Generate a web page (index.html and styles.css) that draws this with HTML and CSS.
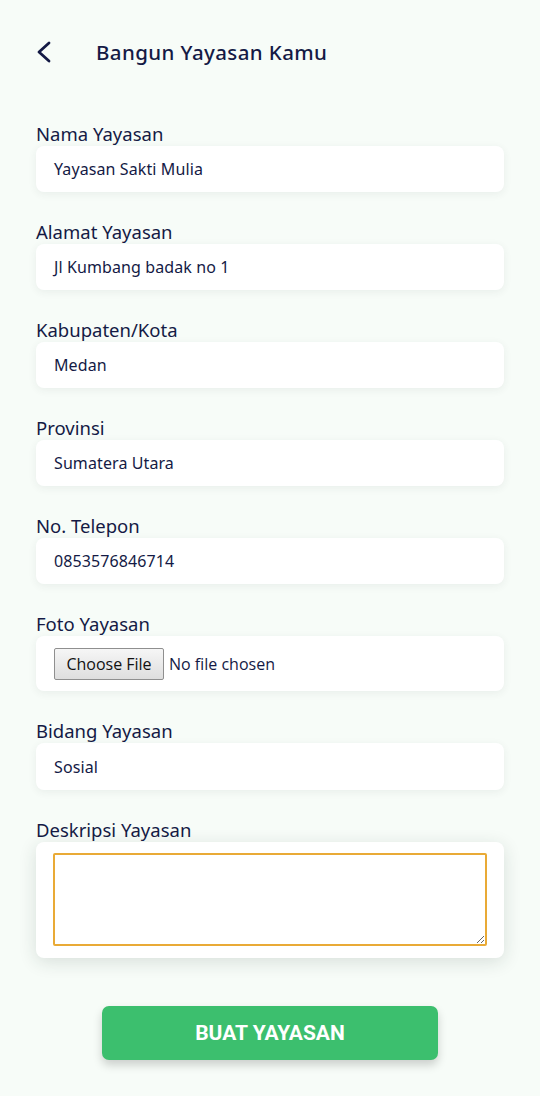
FILE: index.html
```html
<!DOCTYPE html>
<html lang="id">
<head>
<meta charset="utf-8">
<title>Bangun Yayasan Kamu</title>
<link rel="stylesheet" href="styles.css">
</head>
<body>
<div class="page">
  <header class="topbar">
    <button class="back" aria-label="Kembali">
      <svg width="16" height="22" viewBox="0 0 16 22"><path d="M13 2 L3 11 L13 20" fill="none" stroke="#141a45" stroke-width="2.8" stroke-linecap="round" stroke-linejoin="round"/></svg>
    </button>
    <h1 class="title">Bangun Yayasan Kamu</h1>
  </header>

  <form class="form">
    <div class="field">
      <label class="label">Nama Yayasan</label>
      <div class="box">Yayasan Sakti Mulia</div>
    </div>
    <div class="field">
      <label class="label">Alamat Yayasan</label>
      <div class="box">Jl Kumbang badak no 1</div>
    </div>
    <div class="field">
      <label class="label">Kabupaten/Kota</label>
      <div class="box">Medan</div>
    </div>
    <div class="field">
      <label class="label">Provinsi</label>
      <div class="box">Sumatera Utara</div>
    </div>
    <div class="field">
      <label class="label">No. Telepon</label>
      <div class="box">0853576846714</div>
    </div>
    <div class="field">
      <label class="label">Foto Yayasan</label>
      <div class="box box-file">
        <span class="file-btn">Choose File</span>
        <span class="file-name">No file chosen</span>
      </div>
    </div>
    <div class="field">
      <label class="label">Bidang Yayasan</label>
      <div class="box box-select">Sosial</div>
    </div>
    <div class="field">
      <label class="label">Deskripsi Yayasan</label>
      <div class="box box-area">
        <textarea class="area"></textarea>
      </div>
    </div>
    <div class="actions">
      <button type="button" class="submit">BUAT YAYASAN</button>
    </div>
  </form>
</div>
</body>
</html>
```
FILE: styles.css
```css
* { box-sizing: border-box; }
html, body { margin: 0; padding: 0; }
body {
  background: #f7fcf8;
  font-family: "Noto Sans", "Open Sans", sans-serif;
  color: #141a45;
  width: 540px;
  min-height: 1096px;
}
.page { padding: 0 36px; }
.topbar {
  display: flex;
  align-items: center;
  height: 28px;
  margin-top: 38px;
}
.back {
  background: none;
  border: 0;
  padding: 0;
  width: 16px;
  height: 22px;
  display: flex;
}
.title {
  margin: 0 0 0 44px;
  font-family: "Noto Sans", "Open Sans", sans-serif;
  font-weight: 500;
  font-size: 20.5px;
  letter-spacing: 0.4px;
  color: #141a45;
}
.form { display: flex; flex-direction: column; padding-top: 28px; }
.field { display: flex; flex-direction: column; margin-top: 28px; }
.label {
  font-size: 18.5px;
  line-height: 24px;
  font-weight: 450;
  color: #141a45;
}
.box {
  background: #fff;
  border-radius: 8px;
  height: 46px;
  padding: 0 18px;
  display: flex;
  align-items: center;
  font-size: 16px;
  font-weight: 430;
  letter-spacing: 0.1px;
  color: #141a45;
  box-shadow: 0 2px 8px rgba(40, 60, 50, 0.07);
}
.box-file { height: 55px; }
.box-select { height: 47px; }
.file-btn {
  display: inline-flex;
  align-items: center;
  justify-content: center;
  width: 110px;
  height: 32px;
  border: 1px solid #8f8f8f;
  border-radius: 2px;
  background: linear-gradient(#f6f6f6, #dedede);
  color: #111;
  font-size: 16px;
  font-weight: 400;
  letter-spacing: 0;
  font-family: "Open Sans", sans-serif;
}
.file-name { margin-left: 5px; font-size: 16px; font-weight: 400; letter-spacing: 0; font-family: "Open Sans", sans-serif; color: #141a45; }
.box-area {
  height: 116px;
  padding: 11px 17px 12px 17px;
  align-items: stretch;
  box-shadow: 0 4px 18px rgba(30, 50, 40, 0.14);
}
.area {
  width: 100%;
  height: 93px;
  border: 2px solid #e9aa36;
  border-radius: 2px;
  outline: none;
  resize: vertical;
  font-family: inherit;
}
.actions { display: flex; justify-content: center; margin-top: 48px; }
.submit {
  width: 336px;
  height: 54px;
  border: 0;
  border-radius: 7px;
  background: #3cbf6e;
  color: #fff;
  font-family: "Roboto", "Liberation Sans", sans-serif;
  font-weight: 700;
  font-size: 21px;
  box-shadow: 0 5px 10px rgba(0, 0, 0, 0.18);
}
```
